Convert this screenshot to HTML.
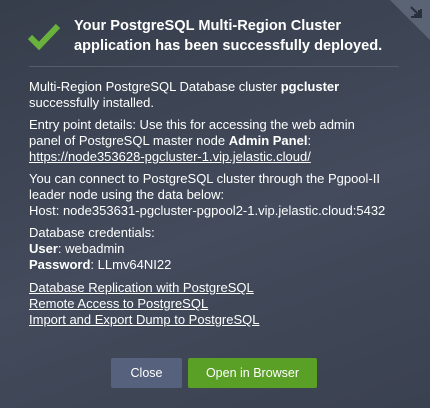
<!DOCTYPE html><html><head><style>
body{margin:0;width:430px;height:408px;overflow:hidden;background:linear-gradient(160deg,#363d4b,#434b5c 55%,#3a4150);font-family:"Liberation Sans",sans-serif;color:#fff;position:relative}
.t{position:absolute;left:29px;font-size:13px;line-height:16px;white-space:nowrap}
a{color:#fff;text-decoration:underline}
h1{position:absolute;left:74px;top:16px;margin:0;font-size:14.6px;line-height:20px;font-weight:bold}
.sep{position:absolute;left:29px;top:66px;width:370px;height:1px;background:#555d6d}
.btn{position:absolute;top:358px;height:30px;line-height:30px;text-align:center;font-size:12.5px;border-radius:2px}
</style></head><body>
<div style="position:absolute;right:0;top:0;width:0;height:0;border-top:40px solid #5b6474;border-left:40px solid transparent"></div>
<svg style="position:absolute;left:409px;top:5px" width="14" height="14"><path d="M2 2L10 10M10 5V10H5M2 12H12V4" stroke="#2a303b" stroke-width="2" fill="none"/></svg>
<svg style="position:absolute;left:27px;top:22px" width="34" height="28"><path d="M3 15L12 24L31 4" stroke="#6ab23e" stroke-width="6" fill="none"/></svg>
<h1>Your PostgreSQL Multi-Region Cluster<br>application has been successfully deployed.</h1>
<div class="sep"></div>
<div class="t" style="top:79px">Multi-Region PostgreSQL Database cluster <b>pgcluster</b><br>successfully installed.</div>
<div class="t" style="top:117px">Entry point details: Use this for accessing the web admin<br>panel of PostgreSQL master node <b>Admin Panel</b>:<br><a>https://node353628-pgcluster-1.vip.jelastic.cloud/</a></div>
<div class="t" style="top:171px">You can connect to PostgreSQL cluster through the Pgpool-II<br>leader node using the data below:<br>Host: node353631-pgcluster-pgpool2-1.vip.jelastic.cloud:5432</div>
<div class="t" style="top:225px">Database credentials:<br><b>User</b>: webadmin<br><b>Password</b>: LLmv64NI22</div>
<div class="t" style="top:280px"><a>Database Replication with PostgreSQL</a><br><a>Remote Access to PostgreSQL</a><br><a>Import and Export Dump to PostgreSQL</a></div>
<div class="btn" style="left:111px;width:71px;background:#56617d">Close</div>
<div class="btn" style="left:188px;width:129px;background:#5a9f26">Open in Browser</div>
</body></html>
